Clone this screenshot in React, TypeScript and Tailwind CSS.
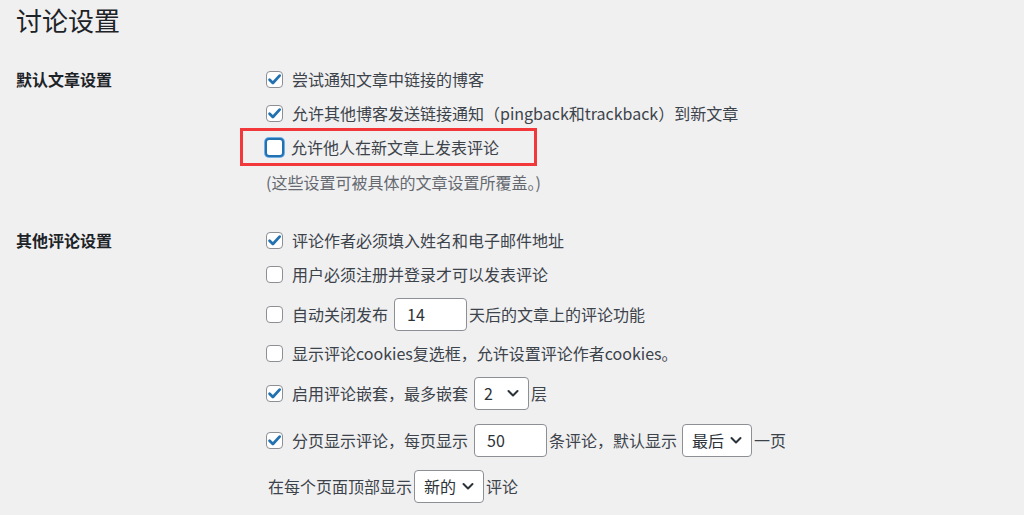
import type { ReactNode } from 'react'

const font = { fontFamily: '"Noto Sans CJK SC", "Noto Sans", sans-serif' }

function Box({ checked = false, focused = false }: { checked?: boolean; focused?: boolean }) {
    if (focused) {
        return (
            <span className="-ml-[1px] mr-[7px] flex h-[19px] w-[19px] shrink-0 items-center justify-center rounded-[4px] border-2 border-[#2271b1] bg-white shadow-[0_0_0_1px_#72aee6]" />
        )
    }
    return (
        <span className="mr-[9px] flex h-[17px] w-[17px] shrink-0 items-center justify-center rounded-[4px] border border-[#8c8f94] bg-white">
            {checked && (
                <svg className="h-[15px] w-[15px]" viewBox="0 0 14 14" fill="none">
                    <path d="M2.4 7.2l3.1 3.1L11.8 3.4" stroke="#2271b1" strokeWidth="2.6" strokeLinecap="round" strokeLinejoin="round" />
                </svg>
            )}
        </span>
    )
}

function Row({ h, children, className = '' }: { h: string; children: ReactNode; className?: string }) {
    return <div className={`relative flex items-center ${h} ${className}`}>{children}</div>
}

function TextInput({ value, w }: { value: string; w: string }) {
    return (
        <span className={`flex h-[33px] ${w} items-center rounded-[4px] border border-[#8c8f94] bg-white pl-[12px] text-[16px] text-[#2c3338]`}>
            {value}
        </span>
    )
}

function Select({ value, w }: { value: string; w: string }) {
    return (
        <span className={`flex h-[33px] ${w} items-center justify-between rounded-[4px] border border-[#8c8f94] bg-white pl-[9px] pr-[9px] text-[16px] text-[#2c3338]`}>
            <span>{value}</span>
            <svg className="h-[12px] w-[12px]" viewBox="0 0 12 12" fill="none">
                <path d="M1.5 4l4.5 4.5L10.5 4" stroke="#2c3338" strokeWidth="2" strokeLinecap="round" strokeLinejoin="round" />
            </svg>
        </span>
    )
}

export default function App() {
    return (
        <div className="min-h-[515px] w-full overflow-hidden bg-[#f0f0f1] text-[16px] text-[#3c434a]" style={font}>
            {/* Page title */}
            <h1 className="h-[40px] pl-[16px] text-[26px] leading-[40px] font-normal text-[#1d2327]">讨论设置</h1>

            {/* 默认文章设置 */}
            <div className="mt-[22px] flex">
                <div className="flex h-[34px] w-[266px] shrink-0 items-center pl-[16px] font-semibold text-[#1d2327]">默认文章设置</div>
                <div className="flex flex-col">
                    <Row h="h-[34px]">
                        <Box checked />
                        尝试通知文章中链接的博客
                    </Row>
                    <Row h="h-[34px]">
                        <Box checked />
                        允许其他博客发送链接通知（pingback和trackback）到新文章
                    </Row>
                    <Row h="h-[34px]">
                        <Box focused />
                        允许他人在新文章上发表评论
                        <span className="pointer-events-none absolute -left-[26px] top-[-2px] h-[38px] w-[297px] border-[3px] border-[#f2383a]" />
                    </Row>
                    <Row h="h-[36px]" className="text-[#646970]">
                        (这些设置可被具体的文章设置所覆盖。)
                    </Row>
                </div>
            </div>

            {/* 其他评论设置 */}
            <div className="mt-[23px] flex">
                <div className="flex h-[34px] w-[266px] shrink-0 items-center pl-[16px] font-semibold text-[#1d2327]">其他评论设置</div>
                <div className="flex flex-col">
                    <Row h="h-[34px]">
                        <Box checked />
                        评论作者必须填入姓名和电子邮件地址
                    </Row>
                    <Row h="h-[34px]">
                        <Box />
                        用户必须注册并登录才可以发表评论
                    </Row>
                    <Row h="h-[46px]">
                        <Box />
                        自动关闭发布
                        <span className="ml-[6px] mr-[2px]">
                            <TextInput value="14" w="w-[73px]" />
                        </span>
                        天后的文章上的评论功能
                    </Row>
                    <Row h="h-[32px]">
                        <Box />
                        显示评论cookies复选框，允许设置评论作者cookies。
                    </Row>
                    <Row h="h-[48px]">
                        <Box checked />
                        启用评论嵌套，最多嵌套
                        <span className="ml-[6px] mr-[2px]">
                            <Select value="2" w="w-[55px]" />
                        </span>
                        层
                    </Row>
                    <Row h="h-[46px]">
                        <Box checked />
                        分页显示评论，每页显示
                        <span className="ml-[6px] mr-[2px]">
                            <TextInput value="50" w="w-[73px]" />
                        </span>
                        条评论，默认显示
                        <span className="ml-[5px] mr-[2px]">
                            <Select value="最后" w="w-[70px]" />
                        </span>
                        一页
                    </Row>
                    <Row h="h-[46px]" className="pl-[2px]">
                        在每个页面顶部显示
                        <span className="ml-[2px] mr-[2px]">
                            <Select value="新的" w="w-[70px]" />
                        </span>
                        评论
                    </Row>
                </div>
            </div>
        </div>
    )
}
